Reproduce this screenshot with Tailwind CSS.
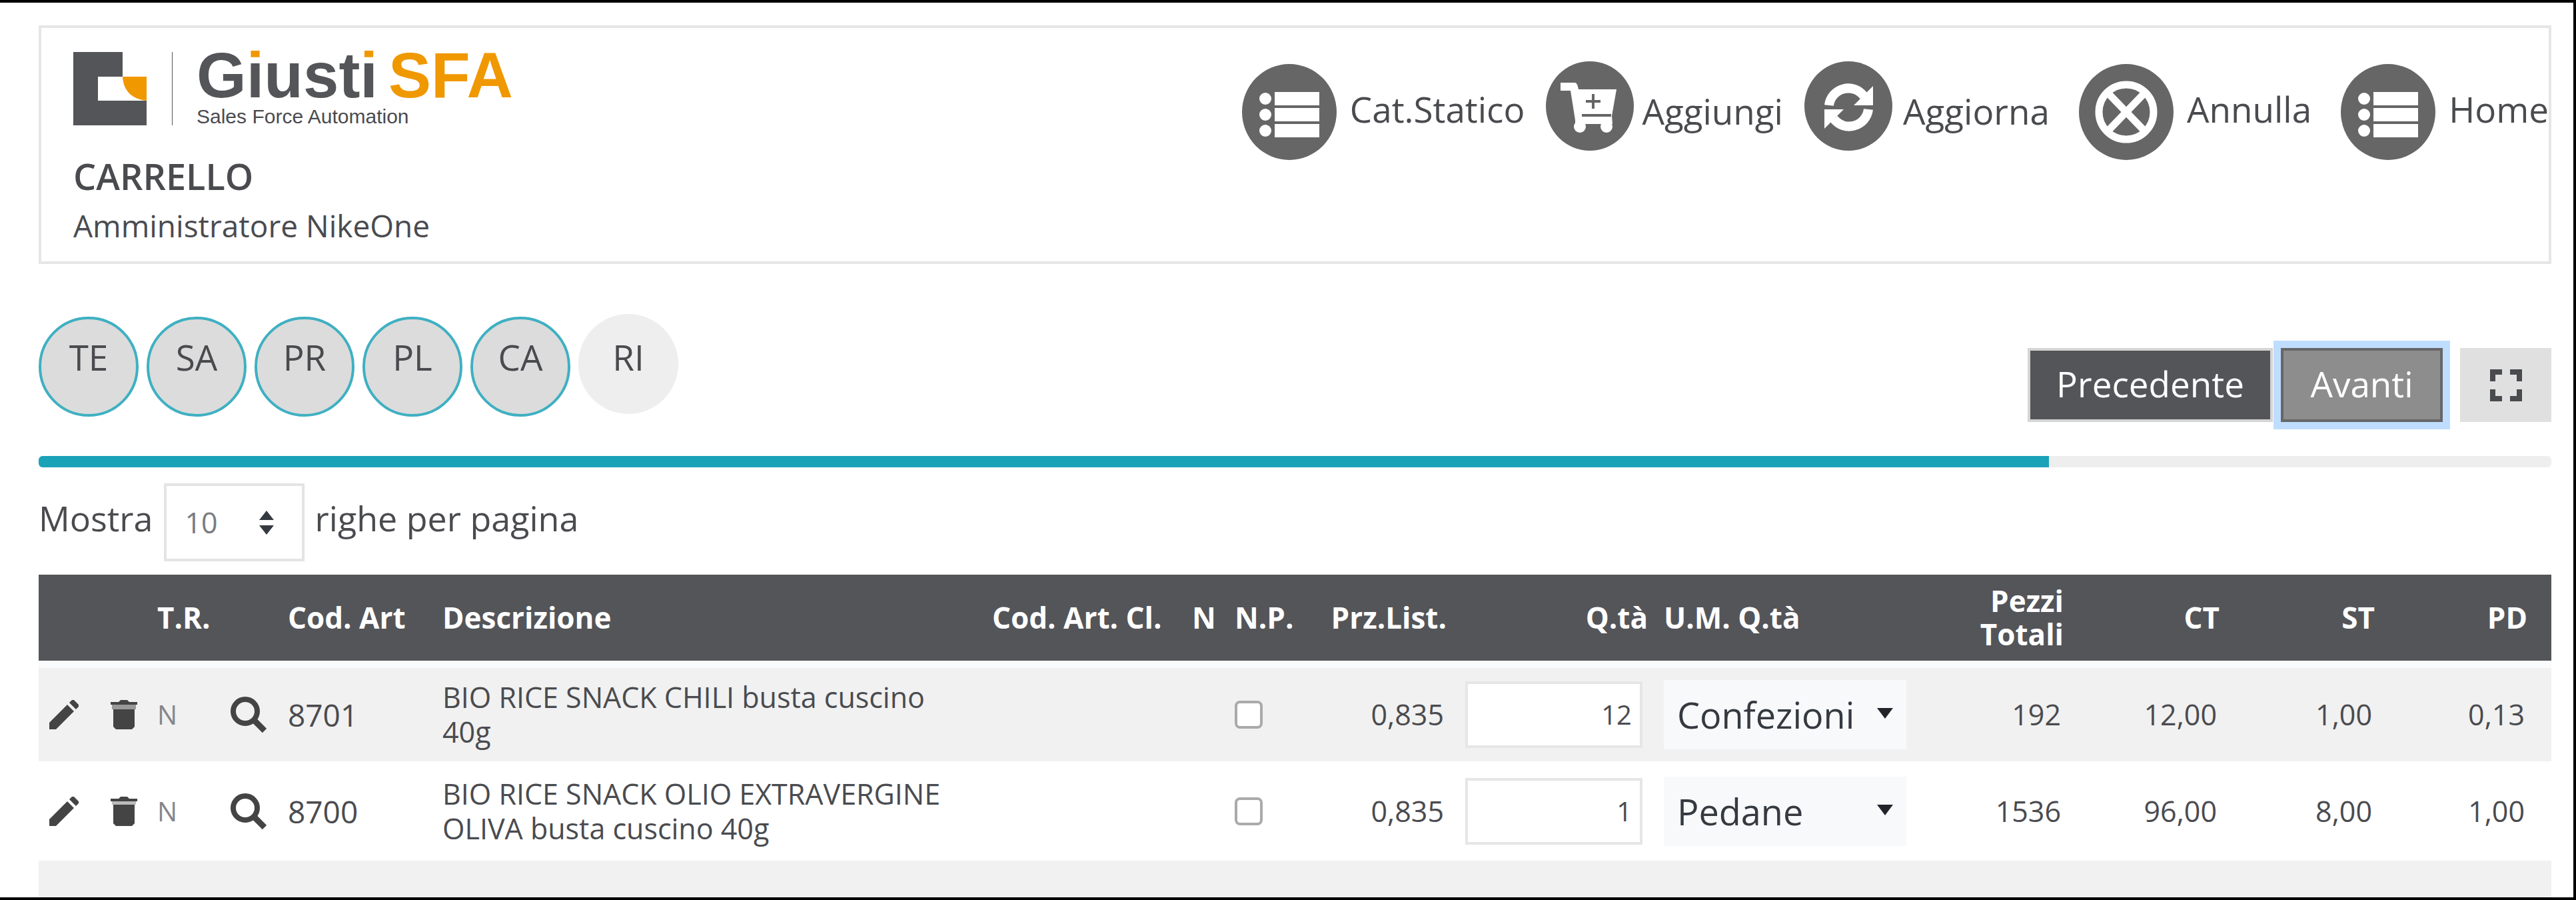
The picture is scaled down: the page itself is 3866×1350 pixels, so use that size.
<!DOCTYPE html>
<html lang="it">
<head>
  <meta charset="UTF-8" />
  <meta name="viewport" content="width=device-width, initial-scale=1.0"/>
  <title>Giusti SFA - Carrello</title>
  <script src="https://cdn.jsdelivr.net/npm/@tailwindcss/browser@4"></script>
</head>
<body class="bg-white text-[#4a4b4f] font-['Open_Sans',sans-serif] text-[53px] leading-[72px]">
  <div class="h-screen overflow-hidden border-t-4 border-b-4 border-r-4 border-black pl-[58px] pr-[33px] pt-[34px]">

    <!-- Header -->
    <header class="flex justify-between border-4 border-[#e6e6e6] h-[358px] pl-12">
      <div class="pt-9">
        <div class="flex">
          <svg class="w-[148px] h-[110px]" viewBox="0 0 148 110" role="img" aria-label="Giusti">
            <path fill="#545559" d="M0 0h74v37H37v36h73v37H0z"/>
            <path fill="#f09800" d="M74 37h36v36C88 71 75 58 74 37z"/>
          </svg>
          <div class="border-l border-[#545559] pl-9 h-[110px] flex flex-col justify-between font-['Liberation_Sans',Arial,sans-serif]">
            <!-- the dots on the i's take the accent colour -->
            <p class="text-[96px] leading-[70px] font-bold text-[#545559]">G<span class="text-transparent bg-clip-text bg-[linear-gradient(#f09800_31px,#545559_31px)]">i</span>ust<span class="text-transparent bg-clip-text bg-[linear-gradient(#f09800_31px,#545559_31px)]">i</span><span class="text-[#f09800] ml-4">SFA</span></p>
            <p class="text-[30px] leading-[26px]">Sales Force Automation</p>
          </div>
        </div>
        <h1 class="text-[54px] leading-[72px] font-semibold mt-10">CARRELLO</h1>
        <p class="text-[46px] leading-[76px]">Amministratore NikeOne</p>
      </div>

      <!-- Toolbar -->
      <nav class="flex items-start pt-[50px]">
        <a href="#" class="flex items-center mt-1 mr-8">
          <svg class="w-[142px] h-[144px] mr-5" viewBox="0 0 142 144">
            <ellipse cx="71" cy="72" rx="71" ry="72" fill="#666"/>
            <g fill="#fff"><circle cx="35" cy="52" r="9"/><circle cx="35" cy="76" r="9"/><circle cx="35" cy="100" r="9"/><path d="M49 42h67v20H49zM49 66h67v20H49zM49 90h67v20H49z"/></g>
          </svg>
          <span class="pb-2">Cat.Statico</span>
        </a>
        <a href="#" class="flex items-center mr-8">
          <svg class="w-[132px] h-[134px] mr-3" viewBox="0 0 132 134">
            <ellipse cx="66" cy="67" rx="66" ry="67" fill="#666"/>
            <path fill="#fff" d="M22 32h22q3 0 5 10h57l-7 40 1 12H44v-6L37 44H22z"/>
            <circle cx="51" cy="98" r="9" fill="#fff"/><circle cx="91" cy="98" r="9" fill="#fff"/>
            <path stroke="#666" stroke-width="4" d="M71 49v22M60 60h22M54 81h44"/>
          </svg>
          <span class="pt-4">Aggiungi</span>
        </a>
        <a href="#" class="flex items-center mr-11">
          <svg class="w-[132px] h-[134px] mr-4" viewBox="0 0 132 134">
            <ellipse cx="66" cy="67" rx="66" ry="67" fill="#666"/>
            <g fill="none" stroke="#fff" stroke-width="14"><path d="M37 66a29 29 0 0 1 52-14M96 72a29 29 0 0 1-52 14"/></g>
            <path fill="#fff" d="M103 37v29H74zM30 101V72h29z"/>
          </svg>
          <span class="pt-4">Aggiorna</span>
        </a>
        <a href="#" class="flex items-center mt-1 mr-11">
          <svg class="w-[142px] h-[144px] mr-5" viewBox="0 0 142 144">
            <ellipse cx="71" cy="72" rx="71" ry="72" fill="#666"/>
            <g fill="none" stroke="#fff" stroke-width="11"><circle cx="71" cy="72" r="41"/><path d="M43 43l56 58M99 43l-56 58"/></g>
          </svg>
          <span class="pb-2">Annulla</span>
        </a>
        <a href="#" class="flex items-center mt-1">
          <svg class="w-[142px] h-[144px] mr-5" viewBox="0 0 142 144">
            <ellipse cx="71" cy="72" rx="71" ry="72" fill="#666"/>
            <g fill="#fff"><circle cx="35" cy="52" r="9"/><circle cx="35" cy="76" r="9"/><circle cx="35" cy="100" r="9"/><path d="M49 42h67v20H49zM49 66h67v20H49zM49 90h67v20H49z"/></g>
          </svg>
          <span class="pb-2">Home</span>
        </a>
      </nav>
    </header>

    <!-- Steps -->
    <div class="flex justify-between mt-[75px]">
      <div class="flex gap-3">
        <button class="w-[150px] h-[150px] mt-1 pb-7 rounded-full border-4 border-[#3fb0c2] bg-[#dcdcdc]">TE</button>
        <button class="w-[150px] h-[150px] mt-1 pb-7 rounded-full border-4 border-[#3fb0c2] bg-[#dcdcdc]">SA</button>
        <button class="w-[150px] h-[150px] mt-1 pb-7 rounded-full border-4 border-[#3fb0c2] bg-[#dcdcdc]">PR</button>
        <button class="w-[150px] h-[150px] mt-1 pb-7 rounded-full border-4 border-[#3fb0c2] bg-[#dcdcdc]">PL</button>
        <button class="w-[150px] h-[150px] mt-1 pb-7 rounded-full border-4 border-[#3fb0c2] bg-[#dcdcdc]">CA</button>
        <button class="w-[150px] h-[150px] pb-5 rounded-full bg-[#eee]">RI</button>
      </div>
      <div class="flex pt-[51px]">
        <button class="w-[368px] h-[111px] mr-3 bg-[#545559] border-4 border-[#d5d5d5] text-white pb-1">Precedente</button>
        <button class="w-[243px] h-[111px] mr-[26px] bg-[#8d8d8d] border-4 border-[#666] ring-[11px] ring-[#bfddff] text-white pb-1">Avanti</button>
        <button class="w-[137px] h-[111px] bg-[#e0e0e0] flex items-center justify-center" aria-label="Schermo intero">
          <svg class="w-12 h-12" viewBox="0 0 48 48" fill="none" stroke="#4a4b4f" stroke-width="8"><path d="M4 18V4h14M30 4h14v14M44 30v14H30M18 44H4V30"/></svg>
        </button>
      </div>
    </div>

    <!-- Progress -->
    <div class="h-[17px] mt-[51px] rounded-md bg-[#eee] overflow-hidden">
      <div class="h-full bg-[#1aa2b8]" style="width: 80%"></div>
    </div>

    <!-- Page length -->
    <div class="flex items-start mt-6 pb-5 text-[52px]">
      <label for="righe" class="pt-4">Mostra</label>
      <div class="relative mx-4">
        <select id="righe" class="appearance-none block w-[211px] h-[117px] pl-7 border-4 border-[#e4e4e4] bg-white text-[43px] text-[#7a7b7e]"><option>10</option></select>
        <svg class="absolute right-[46px] top-[41px] w-[22px] h-9 pointer-events-none" viewBox="0 0 22 36" fill="#343a40"><path d="M11 0l11 14H0zM11 36L0 22h22z"/></svg>
      </div>
      <span class="pt-4">righe per pagina</span>
    </div>

    <!-- Cart -->
    <table class="w-full table-fixed text-[43px] leading-[52px]">
      <colgroup>
        <col class="w-[166px]"><col class="w-[110px]"><col class="w-[86px]"><col class="w-[232px]"><col>
        <col class="w-[300px]"><col class="w-[64px]"><col class="w-[118px]"><col class="w-[224px]"><col class="w-[302px]">
        <col class="w-[388px]"><col class="w-[236px]"><col class="w-[234px]"><col class="w-[233px]"><col class="w-[253px]">
      </colgroup>
      <thead class="bg-[#545559] text-white text-left text-[44px] leading-[50px]">
        <tr class="h-[134px] *:px-3 *:font-bold *:whitespace-nowrap">
          <th></th>
          <th>T.R.</th>
          <th></th>
          <th>Cod. Art</th>
          <th>Descrizione</th>
          <th>Cod. Art. Cl.</th>
          <th>N</th>
          <th>N.P.</th>
          <th class="text-right">Prz.List.</th>
          <th class="text-right">Q.tà</th>
          <th>U.M. Q.tà</th>
          <th class="text-right">Pezzi<br>Totali</th>
          <th class="text-right">CT</th>
          <th class="text-right">ST</th>
          <th class="text-right"><span class="pr-6">PD</span></th>
        </tr>
      </thead>
      <tbody>
        <tr class="h-[146px] bg-[#f1f1f1] border-t-[11px] border-[#f9fafb] *:pl-3 *:pr-4">
          <td>
            <div class="flex gap-12 pl-1">
              <button aria-label="Modifica"><svg class="w-11 h-11" viewBox="0 0 44 44" fill="#444"><path d="M0 34L27 7l10 10L10 44H0zM30 4l4-4h3l7 7v3l-4 4z"/></svg></button>
              <button aria-label="Elimina"><svg class="w-10 h-11" viewBox="0 0 40 44" fill="#444"><path d="M0 3h12l3-3h10l3 3h12v4H0zM4 14h32v26l-4 4H8l-4-4z"/><path fill="#999" d="M2 7h36v7H2z"/></svg></button>
            </div>
          </td>
          <td class="text-[#85868a] text-[40px]">N</td>
          <td><button class="block" aria-label="Cerca"><svg class="w-[54px] h-[54px]" viewBox="0 0 54 54" fill="none" stroke="#444"><circle cx="22" cy="22" r="18" stroke-width="8"/><path d="M34 34l17 17" stroke-width="9"/></svg></button></td>
          <td class="text-[46px]">8701</td>
          <td>BIO RICE SNACK CHILI busta cuscino 40g</td>
          <td></td>
          <td></td>
          <td><input type="checkbox" class="appearance-none block w-[42px] h-[42px] border-4 border-[#aaa] rounded-lg bg-white" aria-label="N.P."></td>
          <td class="text-right">0,835</td>
          <td><div class="px-1"><input type="text" value="12" class="block w-full h-[100px] px-3 border-4 border-[#e6e6e6] bg-white text-right text-[40px]" aria-label="Quantità"></div></td>
          <td>
            <div class="relative -mr-1">
              <select class="appearance-none block w-full h-[104px] pl-5 bg-[#f8f9fb] text-[54px] text-[#343a40]" aria-label="Unità di misura"><option>Confezioni</option></select>
              <svg class="absolute right-5 top-[42px] w-6 h-4 pointer-events-none" viewBox="0 0 24 16" fill="#212529"><path d="M0 0h24L12 16z"/></svg>
            </div>
          </td>
          <td class="text-right">192</td>
          <td class="text-right">12,00</td>
          <td class="text-right">1,00</td>
          <td class="text-right"><span class="pr-6">0,13</span></td>
        </tr>
        <tr class="h-[149px] *:pl-3 *:pr-4">
          <td>
            <div class="flex gap-12 pl-1">
              <button aria-label="Modifica"><svg class="w-11 h-11" viewBox="0 0 44 44" fill="#444"><path d="M0 34L27 7l10 10L10 44H0zM30 4l4-4h3l7 7v3l-4 4z"/></svg></button>
              <button aria-label="Elimina"><svg class="w-10 h-11" viewBox="0 0 40 44" fill="#444"><path d="M0 3h12l3-3h10l3 3h12v4H0zM4 12h32v28l-4 4H8l-4-4z"/><path fill="#bbb" d="M2 7h36v5H2z"/></svg></button>
            </div>
          </td>
          <td class="text-[#85868a] text-[40px]">N</td>
          <td><button class="block" aria-label="Cerca"><svg class="w-[54px] h-[54px]" viewBox="0 0 54 54" fill="none" stroke="#444"><circle cx="22" cy="22" r="18" stroke-width="8"/><path d="M34 34l17 17" stroke-width="9"/></svg></button></td>
          <td class="text-[46px]">8700</td>
          <td>BIO RICE SNACK OLIO EXTRAVERGINE OLIVA busta cuscino 40g</td>
          <td></td>
          <td></td>
          <td><input type="checkbox" class="appearance-none block w-[42px] h-[42px] border-4 border-[#aaa] rounded-lg bg-white" aria-label="N.P."></td>
          <td class="text-right">0,835</td>
          <td><div class="px-1"><input type="text" value="1" class="block w-full h-[100px] px-3 border-4 border-[#e6e6e6] bg-white text-right text-[40px]" aria-label="Quantità"></div></td>
          <td>
            <div class="relative -mr-1">
              <select class="appearance-none block w-full h-[104px] pl-5 bg-[#f8f9fb] text-[54px] text-[#343a40]" aria-label="Unità di misura"><option>Pedane</option></select>
              <svg class="absolute right-5 top-[42px] w-6 h-4 pointer-events-none" viewBox="0 0 24 16" fill="#212529"><path d="M0 0h24L12 16z"/></svg>
            </div>
          </td>
          <td class="text-right">1536</td>
          <td class="text-right">96,00</td>
          <td class="text-right">8,00</td>
          <td class="text-right"><span class="pr-6">1,00</span></td>
        </tr>
        <tr class="h-[150px] bg-[#f1f1f1]"><td colspan="15"></td></tr>
      </tbody>
    </table>
  </div>
</body>
</html>
